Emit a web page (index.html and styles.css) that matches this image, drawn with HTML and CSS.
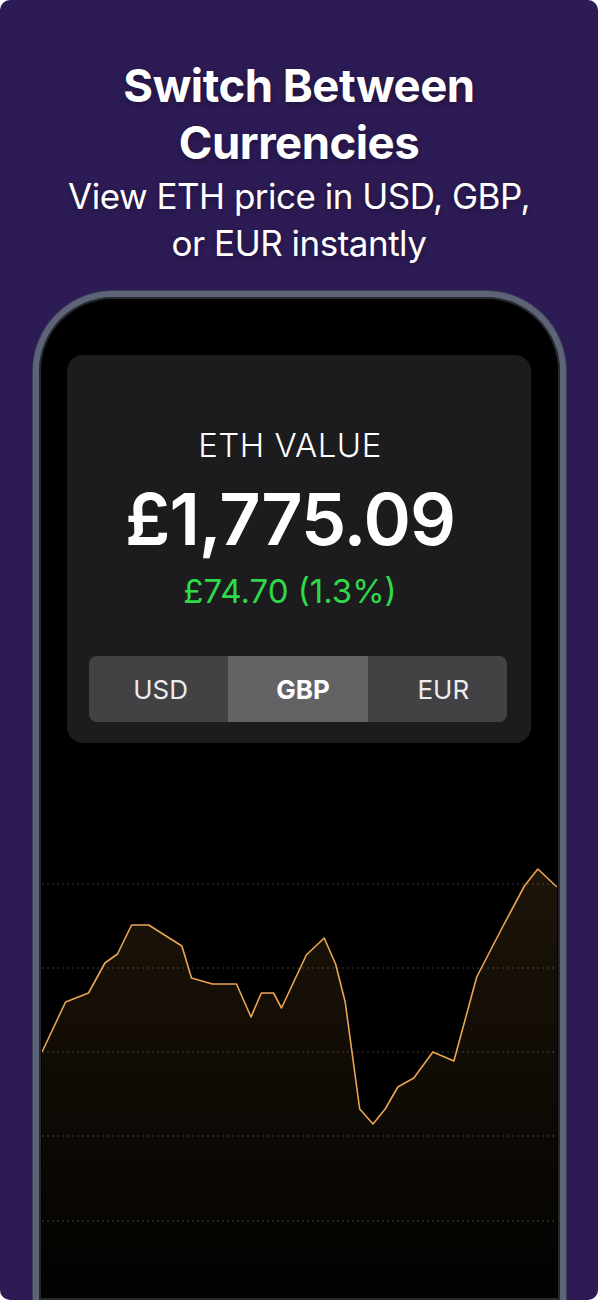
FILE: index.html
```html
<!DOCTYPE html>
<html lang="en">
<head>
    <meta charset="UTF-8">
    <meta name="viewport" content="width=device-width, initial-scale=1.0">
    <title>Switch Between Currencies</title>
    <link rel="stylesheet" href="styles.css">
</head>
<body>
    <div class="frame">
        <div class="headline">
            <h1>Switch Between<br>Currencies</h1>
            <p>View ETH price in USD, GBP,<br>or EUR instantly</p>
        </div>

        <div class="phone">
            <div class="price-card">
                <div class="readout">
                    <div class="label">ETH VALUE</div>
                    <div class="price">£1,775.09</div>
                    <div class="change">£74.70 (1.3%)</div>
                </div>
                <div class="segments">
                    <button>USD</button>
                    <button class="active">GBP</button>
                    <button>EUR</button>
                </div>
            </div>

            <!-- price chart, drawn in page coordinates -->
            <svg class="chart" viewBox="42 744 515 556" width="515" height="556">
                <defs>
                    <linearGradient id="fade" gradientUnits="userSpaceOnUse" x1="0" y1="870" x2="0" y2="1300">
                        <stop offset="0" stop-color="#f2a94a" stop-opacity="0.12"/>
                        <stop offset="1" stop-color="#f2a94a" stop-opacity="0.01"/>
                    </linearGradient>
                </defs>
                <g class="grid">
                    <line x1="42" y1="885" x2="557" y2="885"/>
                    <line x1="42" y1="969" x2="557" y2="969"/>
                    <line x1="42" y1="1053" x2="557" y2="1053"/>
                    <line x1="42" y1="1137" x2="557" y2="1137"/>
                    <line x1="42" y1="1222" x2="557" y2="1222"/>
                </g>
                <polygon class="area" fill="url(#fade)" points="42,1053 65.6,1003 88.5,994 104.9,964 117.5,955 131.6,926 148.7,926 181.9,947 191.5,979 212.4,985 236.5,985 251,1018 261.3,994 273.5,994 281.5,1009 306.3,956 324.2,939 335.6,965 345.2,1003 359.7,1110 373,1125 385.2,1110 397.8,1088 413.8,1079 432.9,1053 453.9,1062 476.7,978 501.5,930 524.4,887 537.8,870 557,888 557,1300 42,1300"/>
                <polyline class="line" points="42,1053 65.6,1003 88.5,994 104.9,964 117.5,955 131.6,926 148.7,926 181.9,947 191.5,979 212.4,985 236.5,985 251,1018 261.3,994 273.5,994 281.5,1009 306.3,956 324.2,939 335.6,965 345.2,1003 359.7,1110 373,1125 385.2,1110 397.8,1088 413.8,1079 432.9,1053 453.9,1062 476.7,978 501.5,930 524.4,887 537.8,870 557,888"/>
            </svg>
        </div>
    </div>
</body>
</html>
```

FILE: styles.css
```css
body {
    margin: 0;
    padding: 0;
    background: #ffffff;
    font-family: Inter, "Noto Sans", sans-serif;
}

.frame {
    height: 1300px;
    background: #2d1b55;
    border-radius: 10px;
    overflow: hidden;
    display: flex;
    flex-direction: column;
    align-items: center;
}

.headline {
    text-align: center;
    color: #ffffff;
    padding-top: 57px;
    text-shadow: 0 2px 6px rgba(0, 0, 0, 0.35);
}

.headline h1 {
    margin: 0;
    font-size: 45.5px;
    line-height: 57px;
    font-weight: 700;
    letter-spacing: -0.5px;
}

.headline p {
    margin: 2px 0 0;
    font-size: 35px;
    line-height: 47px;
    font-weight: 400;
    letter-spacing: -0.5px;
}

.phone {
    margin-top: 24px;
    margin-left: 1px;
    width: 521px;
    flex: 1;
    background: #000000;
    border: 6px solid #5e6477;
    border-bottom: none;
    border-radius: 80px 80px 0 0;
    box-shadow: inset 0 0 0 2px #262830, 0 0 0 1px #3b3f55;
}

.price-card {
    margin: 58px 29px 0 28px;
    height: 388px;
    background: #1c1c1e;
    border-radius: 16px;
    box-sizing: border-box;
    padding-top: 70px;
    text-align: center;
    color: #ffffff;
}

.readout {
    padding-right: 18px;
}

.label {
    font-size: 33px;
    line-height: 40px;
    font-weight: 300;
    letter-spacing: 0.5px;
}

.price {
    margin-top: 14px;
    font-size: 72px;
    line-height: 80px;
    font-weight: 600;
    letter-spacing: -1px;
}

.change {
    margin-top: 12px;
    font-size: 33px;
    line-height: 40px;
    color: #30d94a;
}

.segments {
    display: flex;
    margin: 45px 24px 0 22px;
    height: 66px;
    background: #424245;
    border-radius: 8px;
    overflow: hidden;
}

.segments button {
    flex: none;
    width: calc(100% / 3);
    box-sizing: border-box;
    border: none;
    background: transparent;
    color: #ececec;
    font-family: inherit;
    font-size: 26px;
    font-weight: 400;
    padding: 0 0 0 4px;
}

.segments button.active {
    background: #636366;
    color: #ffffff;
    font-weight: 700;
    padding-left: 10px;
}

.segments button:last-child {
    padding-left: 12px;
}

.chart {
    display: block;
    margin: 0 3px;
}

.grid line {
    stroke: #3a3a3d;
    stroke-width: 1;
    stroke-dasharray: 2 3;
}

.line {
    fill: none;
    stroke: #e9a552;
    stroke-width: 1.6;
    stroke-linejoin: round;
}
```
